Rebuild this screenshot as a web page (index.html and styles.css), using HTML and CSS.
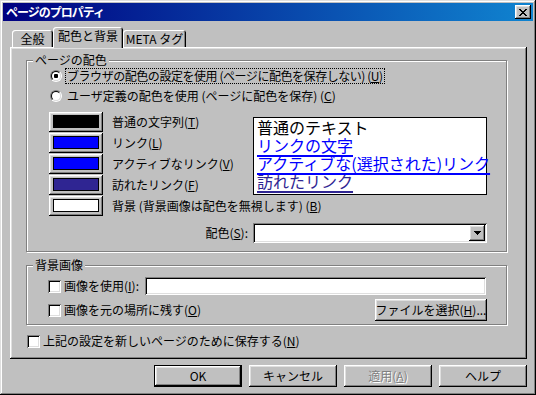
FILE: index.html
```html
<!DOCTYPE html>
<html lang="ja">
<head>
    <meta charset="UTF-8">
    <title>ページのプロパティ</title>
    <link rel="stylesheet" href="styles.css">
</head>
<body>
    <div class="window">
        <div class="titlebar">
            <span class="title">ページのプロパティ</span>
            <span class="close">
                <svg width="8" height="7" viewBox="0 0 8 7" shape-rendering="crispEdges">
                    <path d="M0 0h2v1h-2zM6 0h2v1h-2zM1 1h2v1h-2zM5 1h2v1h-2zM2 2h4v1h-4zM3 3h2v1h-2zM2 4h4v1h-4zM1 5h2v1h-2zM5 5h2v1h-2zM0 6h2v1h-2zM6 6h2v1h-2z" fill="#000"/>
                </svg>
            </span>
        </div>

        <!-- タブ -->
        <div class="tabs">
            <div class="tab tab-general">全般</div>
            <div class="tab tab-active">配色と背景</div>
            <div class="tab tab-meta">META タグ</div>
        </div>

        <div class="panel">
            <fieldset class="group group-colors">
                <legend>ページの配色</legend>
                <div class="group-body">
                    <div class="radio-row">
                        <span class="radio checked"></span>
                        <span class="label focused tight">ブラウザの配色の設定を使用 (ページに配色を保存しない) (<u>U</u>)</span>
                    </div>
                    <div class="radio-row second">
                        <span class="radio"></span>
                        <span class="label">ユーザ定義の配色を使用 (ページに配色を保存) (<u>C</u>)</span>
                    </div>

                    <div class="color-area">
                        <div class="swatches">
                            <div class="swatch-row">
                                <span class="btn swatch"><i class="sw-text"></i></span>
                                <span>普通の文字列(<u>T</u>)</span>
                            </div>
                            <div class="swatch-row">
                                <span class="btn swatch"><i class="sw-link"></i></span>
                                <span>リンク(<u>L</u>)</span>
                            </div>
                            <div class="swatch-row">
                                <span class="btn swatch"><i class="sw-active"></i></span>
                                <span>アクティブなリンク(<u>V</u>)</span>
                            </div>
                            <div class="swatch-row">
                                <span class="btn swatch"><i class="sw-visited"></i></span>
                                <span>訪れたリンク(<u>F</u>)</span>
                            </div>
                            <div class="swatch-row">
                                <span class="btn swatch"><i class="sw-back"></i></span>
                                <span class="nowrap">背景 (背景画像は配色を無視します) (<u>B</u>)</span>
                            </div>
                        </div>
                        <div class="preview">
                            <div>普通のテキスト</div>
                            <div><span class="pv-link">リンクの文字</span></div>
                            <div><span class="pv-active">アクティブな(選択された)リンク</span></div>
                            <div><span class="pv-visited">訪れたリンク</span></div>
                        </div>
                    </div>

                    <div class="scheme-row">
                        <span>配色(<u>S</u>):</span>
                        <div class="combo">
                            <span class="btn drop">
                                <svg width="7" height="4" viewBox="0 0 7 4" shape-rendering="crispEdges">
                                    <path d="M0 0h7v1h-7zM1 1h5v1h-5zM2 2h3v1h-3zM3 3h1v1h-1z" fill="#000"/>
                                </svg>
                            </span>
                        </div>
                    </div>
                </div>
            </fieldset>

            <fieldset class="group group-image">
                <legend>背景画像</legend>
                <div class="group-body">
                    <div class="check-row">
                        <span class="check"></span>
                        <span>画像を使用(<u>I</u>):</span>
                        <div class="field"></div>
                    </div>
                    <div class="check-row second">
                        <span class="check"></span>
                        <span>画像を元の場所に残す(<u>O</u>)</span>
                        <span class="btn file-btn">ファイルを選択(<u>H</u>)...</span>
                    </div>
                </div>
            </fieldset>

            <div class="check-row save-row">
                <span class="check"></span>
                <span>上記の設定を新しいページのために保存する(<u>N</u>)</span>
            </div>
        </div>

        <div class="actions">
            <span class="btn action default">OK</span>
            <span class="btn action">キャンセル</span>
            <span class="btn action disabled">適用(<u>A</u>)</span>
            <span class="btn action">ヘルプ</span>
        </div>
    </div>
</body>
</html>
```

FILE: styles.css
```css
body {
    margin: 0;
    background-color: #c0c0c0;
    font-family: "Noto Sans CJK JP", sans-serif;
    font-size: 12px;
    line-height: 14px;
    color: #000;
}
u {
    text-decoration-thickness: 1px;
    text-underline-offset: 1px;
}
.window {
    width: 536px;
    height: 395px;
    box-sizing: border-box;
    padding: 3px;
    box-shadow: inset -1px -1px #000, inset 1px 1px #dfdfdf, inset -2px -2px #808080, inset 2px 2px #fff;
}

/* タイトルバー */
.titlebar {
    height: 18px;
    display: flex;
    align-items: center;
    justify-content: space-between;
    padding: 0 2px 0 3px;
    background: linear-gradient(to right, #000080, #1084d0);
}
.title {
    color: #fff;
    font-weight: bold;
    letter-spacing: -1px;
}
.close {
    width: 16px;
    height: 14px;
    display: flex;
    align-items: center;
    justify-content: center;
    background-color: #c0c0c0;
    box-shadow: inset -1px -1px #000, inset 1px 1px #fff, inset -2px -2px #808080, inset 2px 2px #dfdfdf;
}

/* タブ */
.tabs {
    display: flex;
    align-items: flex-end;
    height: 20px;
    margin: 6px 0 0 9px;
    position: relative;
    z-index: 1;
}
.tab {
    height: 17px;
    box-sizing: border-box;
    padding-top: 2px;
    text-align: center;
    white-space: nowrap;
    border-radius: 3px 3px 0 0;
    background-color: #c0c0c0;
    box-shadow: inset 1px 1px #fff, inset -1px 0 #000, inset -2px 0 #808080;
}
.tab-general {
    width: 41px;
}
.tab-active {
    width: 70px;
    height: 21px;
    margin-bottom: -1px;
    padding-top: 2px;
}
.tab-meta {
    width: 63px;
}

.panel {
    height: 312px;
    box-sizing: border-box;
    margin: 0 6px 0 7px;
    padding: 6px 20px 0 16px;
    box-shadow: inset -1px -1px #000, inset 1px 1px #fff, inset -2px -2px #808080, inset 2px 2px #dfdfdf;
}

/* グループ */
.group {
    margin: 0;
    padding: 0;
    min-width: 0;
    border: 1px solid #808080;
    box-shadow: 1px 1px #fff, inset 1px 1px #fff;
}
.group legend {
    margin-left: 6px;
    padding: 0 2px;
    line-height: 14px;
    background-color: #c0c0c0;
}
.group-body {
    padding: 0 19px 8px 22px;
}
.group-image {
    margin-top: 6px;
}
.group-image .group-body {
    padding-bottom: 3px;
}

.radio-row {
    height: 18px;
    display: flex;
    align-items: center;
}
.radio-row.second {
    margin-top: 2px;
}
.radio {
    width: 12px;
    height: 12px;
    box-sizing: border-box;
    margin-left: 1px;
    border-radius: 50%;
    border: 1px solid;
    border-color: #808080 #fff #fff #808080;
    display: flex;
    align-items: center;
    justify-content: center;
}
.radio::before {
    content: "";
    width: 10px;
    height: 10px;
    box-sizing: border-box;
    border-radius: 50%;
    border: 1px solid;
    border-color: #000 #dfdfdf #dfdfdf #000;
    background-color: #fff;
}
.radio.checked::before {
    background: radial-gradient(circle, #000 0 2px, #fff 2.5px);
}
.label {
    margin-left: 4px;
    padding: 0 1px;
    white-space: nowrap;
}
.tight {
    letter-spacing: -0.45px;
}
.focused {
    outline: 1px dotted #000;
}

/* 配色 */
.color-area {
    display: grid;
    grid-template-columns: 204px 234px;
    margin-top: 7px;
}
.swatches {
    display: flex;
    flex-direction: column;
    gap: 1px;
}
.swatch-row {
    height: 20px;
    display: flex;
    align-items: center;
    gap: 9px;
}
.nowrap {
    white-space: nowrap;
}
.btn {
    background-color: #c0c0c0;
    box-shadow: inset -1px -1px #000, inset 1px 1px #fff, inset -2px -2px #808080, inset 2px 2px #dfdfdf;
    display: flex;
    align-items: center;
    justify-content: center;
    white-space: nowrap;
}
.swatch {
    width: 54px;
    height: 20px;
    flex: none;
    padding-bottom: 1px;
    box-sizing: border-box;
}
.swatch i {
    width: 46px;
    height: 13px;
    box-sizing: border-box;
    border: 1px solid #000;
}
.sw-text {
    background-color: #000;
}
.sw-link,
.sw-active {
    background-color: #0000ff;
}
.sw-visited {
    background-color: #2f2592;
}
.sw-back {
    background-color: #fff;
}

.preview {
    width: 234px;
    height: 78px;
    box-sizing: border-box;
    margin-top: 5px;
    padding: 0 3px;
    border: 1px solid #000;
    background-color: #fff;
    font-size: 16px;
    line-height: 18px;
    white-space: nowrap;
}
.pv-link,
.pv-active,
.pv-visited {
    color: #0000ff;
    text-decoration: underline;
    text-decoration-thickness: 2px;
    text-underline-offset: 3px;
}
.pv-visited {
    color: #2f2592;
}

.scheme-row {
    display: flex;
    justify-content: flex-end;
    align-items: center;
    gap: 5px;
    margin-top: 7px;
}
.combo {
    width: 234px;
    height: 20px;
    box-sizing: border-box;
    padding: 2px;
    display: flex;
    justify-content: flex-end;
    background-color: #fff;
    box-shadow: inset 1px 1px #808080, inset -1px -1px #fff, inset 2px 2px #000, inset -2px -2px #dfdfdf;
}
.drop {
    width: 16px;
    height: 16px;
}

/* 背景画像 */
.check-row {
    display: flex;
    align-items: center;
    gap: 3px;
}
.group-image .check-row {
    height: 18px;
    margin-top: 5px;
}
.group-image .check-row.second {
    height: 22px;
    margin-top: 4px;
}
.check {
    width: 13px;
    height: 13px;
    flex: none;
    margin-left: -1px;
    background-color: #fff;
    box-shadow: inset 1px 1px #808080, inset -1px -1px #fff, inset 2px 2px #000, inset -2px -2px #dfdfdf;
}
.field {
    width: 341px;
    height: 18px;
    margin-left: auto;
    margin-right: 1px;
    background-color: #fff;
    box-shadow: inset 1px 1px #808080, inset -1px -1px #fff, inset 2px 2px #000, inset -2px -2px #dfdfdf;
}
.file-btn {
    width: 112px;
    height: 22px;
    margin-left: auto;
}
.save-row {
    height: 18px;
    margin-top: 7px;
}
.save-row .check {
    margin-left: 1px;
}

/* ボタン */
.actions {
    display: flex;
    justify-content: flex-end;
    gap: 7px;
    margin: 6px 6px 0 0;
}
.action {
    width: 88px;
    height: 22px;
    box-sizing: border-box;
}
.action.default {
    box-shadow: inset 0 0 0 1px #000, inset -2px -2px #000, inset 2px 2px #fff, inset -3px -3px #808080, inset 3px 3px #dfdfdf;
}
.action.disabled {
    color: #808080;
    text-shadow: 1px 1px #fff;
}
```
